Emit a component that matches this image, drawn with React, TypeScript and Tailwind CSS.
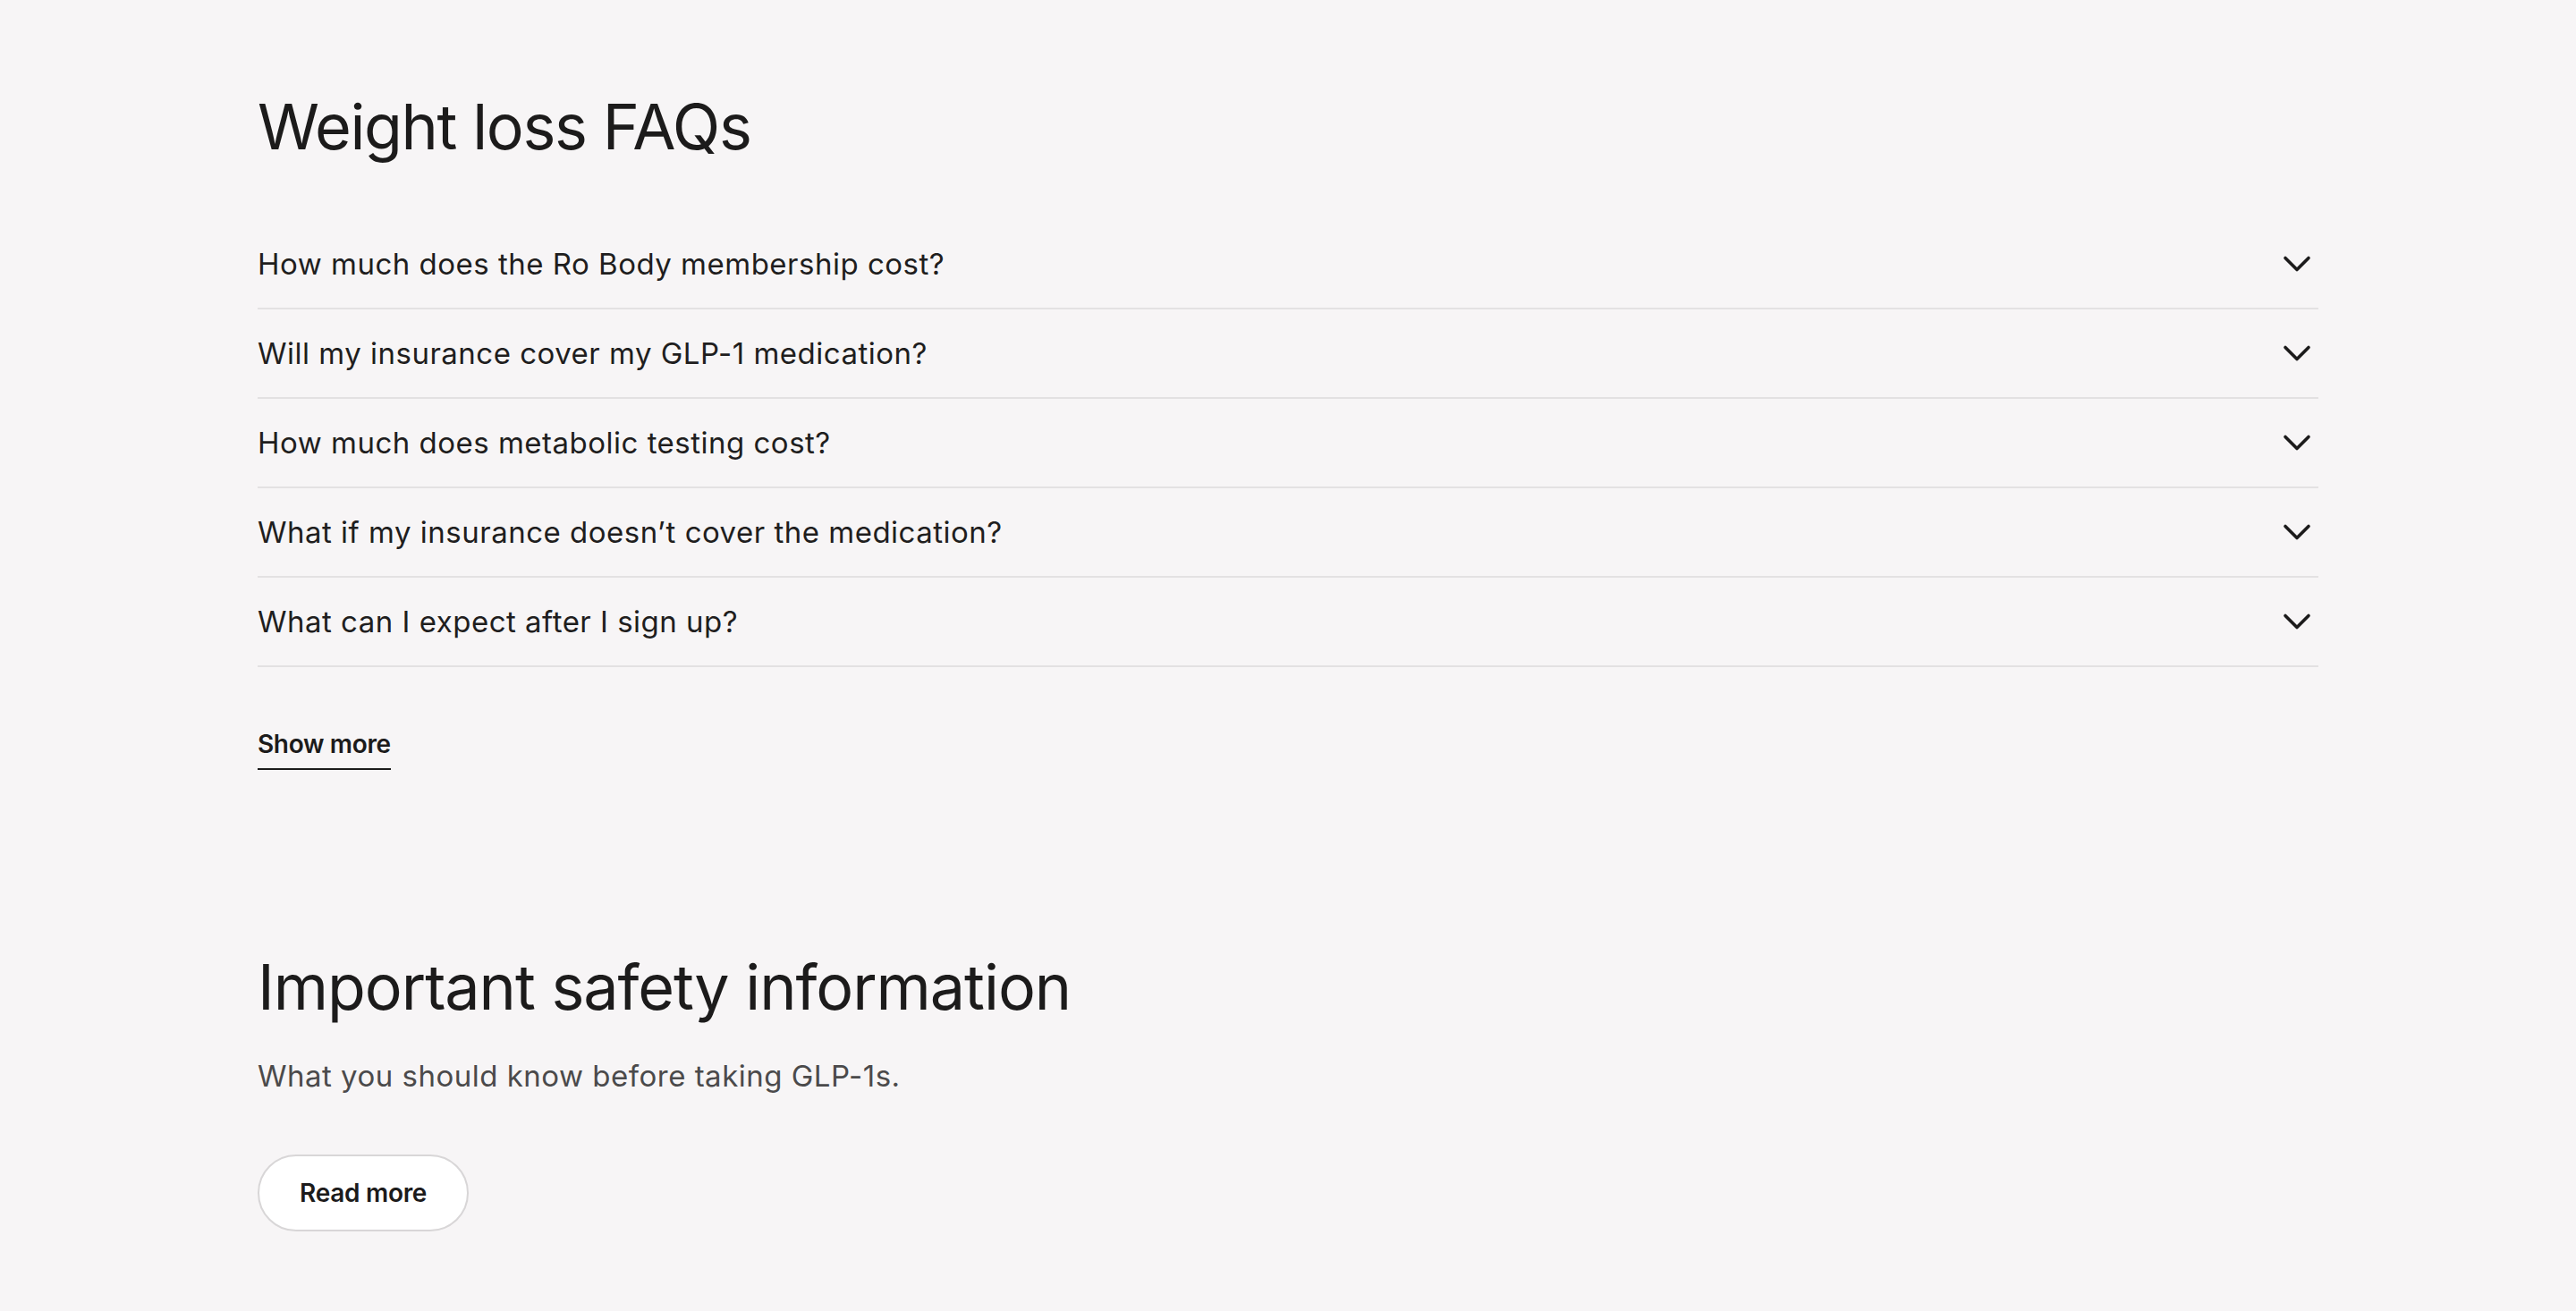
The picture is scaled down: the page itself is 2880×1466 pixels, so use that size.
import React from "react";

const questions = [
  "How much does the Ro Body membership cost?",
  "Will my insurance cover my GLP-1 medication?",
  "How much does metabolic testing cost?",
  "What if my insurance doesn\u2019t cover the medication?",
  "What can I expect after I sign up?",
];

function Chevron() {
  return (
    <svg width="32" height="32" viewBox="0 0 32 32" fill="none" className="mr-[8px] shrink-0">
      <path d="M3 9.5 L16 22.5 L29 9.5" stroke="#1c1b1b" strokeWidth="3.6" strokeLinecap="round" strokeLinejoin="round" />
    </svg>
  );
}

export default function App() {
  return (
    <div className="min-h-[1466px] w-full bg-[#f7f5f6] text-[#1c1b1b]" style={{ fontFamily: "Inter, 'Noto Sans', sans-serif" }}>
      <div className="mx-auto w-[2304px] pt-[106px] pb-[90px]">
        <h2 className="text-[70px] leading-[72px] font-normal tracking-[-0.02em] text-[#1c1b1b]">Weight loss FAQs</h2>
        <div className="mt-[68px]">
          {questions.map((q) => (
            <div key={q} className="flex h-[100px] items-center justify-between border-b-2 border-[#e3e1e2]">
              <span className="text-[33px] leading-[44px] tracking-[0.015em] text-[#1f1e1e]">{q}</span>
              <Chevron />
            </div>
          ))}
        </div>
        <div className="mt-[68px]">
          <a className="inline-block border-b-2 border-[#1c1b1b] pb-[9px] text-[28px] leading-[36px] font-semibold tracking-[-0.012em] text-[#1c1b1b]">Show more</a>
        </div>
        <h2 className="mt-[207px] text-[70px] leading-[72px] font-normal tracking-[-0.015em] text-[#1c1b1b]">Important safety information</h2>
        <p className="mt-[39px] text-[33px] leading-[48px] tracking-[0.015em] text-[#4b4a4b]">What you should know before taking GLP-1s.</p>
        <button className="mt-[64px] rounded-full border-2 border-[#d8d6d7] bg-white px-[45px] py-[23px] text-[28px] leading-[36px] font-semibold tracking-[-0.01em] text-[#1c1b1b]">Read more</button>
      </div>
    </div>
  );
}
